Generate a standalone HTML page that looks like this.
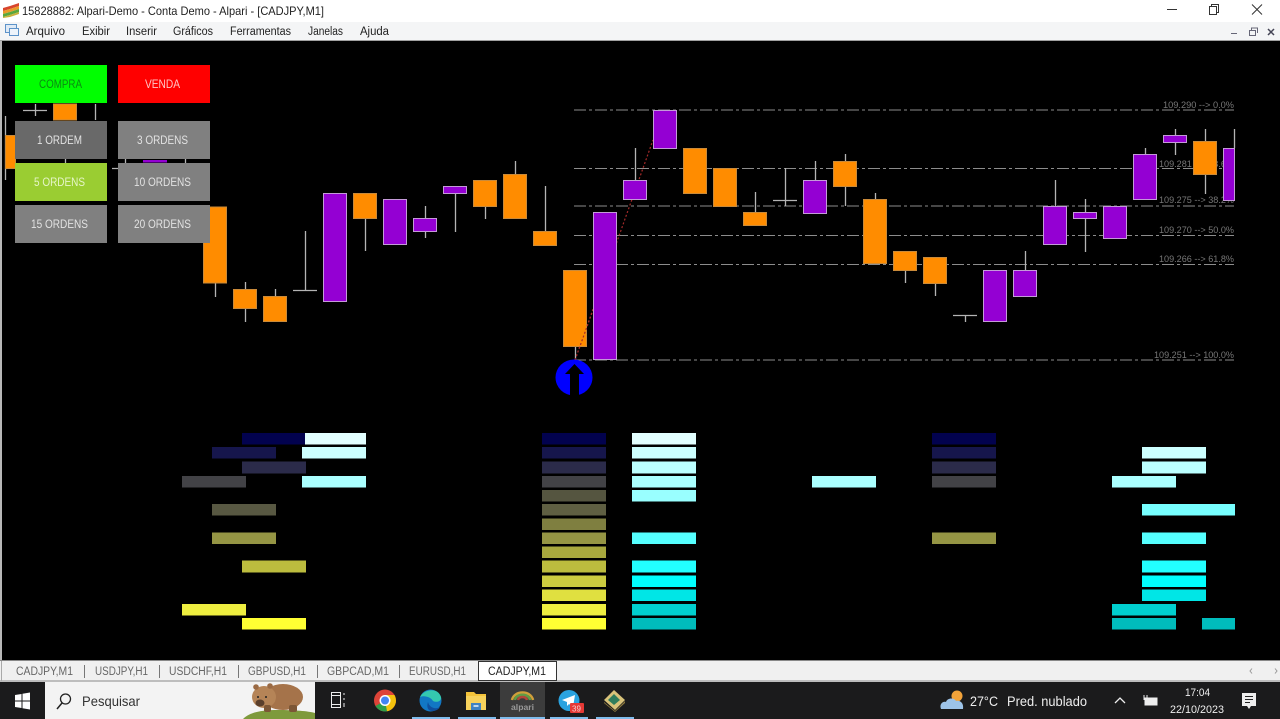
<!DOCTYPE html>
<html><head><meta charset="utf-8"><title>Alpari</title>
<style>
html,body{margin:0;padding:0;background:#000;width:1280px;height:719px;overflow:hidden}
svg{display:block;font-family:"Liberation Sans",sans-serif;filter:blur(.35px)}
.w{stroke:#b4b4b4;stroke-width:1.300;fill:none}
.o{fill:#ff8c00;stroke:#c98a3a;stroke-width:1}
.p{fill:#9400d3;stroke:#c49ad8;stroke-width:1}
.f{stroke:#8c8c8c;stroke-width:1;stroke-dasharray:12 3 3 3;fill:none}
.l{fill:#777;font-size:9.500px}
.b{font-size:12px;fill:#e2e2e2}
.m{font-size:11.500px;fill:#222}
.t{font-size:11.500px;fill:#666}
.s{stroke:#777;stroke-width:1}
</style></head><body>
<svg width="1280" height="719" viewBox="0 0 1280 719" xmlns="http://www.w3.org/2000/svg">
<rect width="1280" height="719" fill="#000"/>
<!-- title bar -->
<rect width="1280" height="22" fill="#fff"/>
<g>
<path d="M3 8 L10 6 L19 3 L19 6 L10 9 L3 11Z" fill="#d8452c"/>
<path d="M3 11 L10 9 L19 6 L19 9 L10 12 L3 14Z" fill="#ea9a2a"/>
<path d="M3 14 L10 12 L19 9 L19 12 L10 15 L3 17Z" fill="#5aa83c"/>
<path d="M3 17 L10 15 L19 12 L19 14 L10 17 L3 18Z" fill="#c9b13a"/>
</g>
<text x="22" y="15" font-size="12" fill="#222" textLength="302" lengthAdjust="spacingAndGlyphs">15828882: Alpari-Demo - Conta Demo - Alpari - [CADJPY,M1]</text>
<path d="M1167 9.500H1177" stroke="#333" fill="none"/>
<path d="M1209.500 6.500h7v8h-7z M1211.500 6.500v-2h7v8h-2" stroke="#333" fill="none"/>
<path d="M1252 4.500L1262 14.500M1262 4.500L1252 14.500" stroke="#333" fill="none"/>
<!-- menu bar -->
<rect y="22" width="1280" height="18" fill="#f4f5f6"/>
<rect y="40" width="1280" height="1" fill="#a0a0a0"/>
<rect x="5.500" y="24.500" width="11" height="8" fill="#dfeaf6" stroke="#5d93c9"/>
<rect x="9.500" y="28.500" width="9" height="7" fill="#eef4fb" stroke="#5d93c9"/>
<text class="m" x="26" y="35" textLength="39" lengthAdjust="spacingAndGlyphs">Arquivo</text>
<text class="m" x="82" y="35" textLength="28" lengthAdjust="spacingAndGlyphs">Exibir</text>
<text class="m" x="126" y="35" textLength="31" lengthAdjust="spacingAndGlyphs">Inserir</text>
<text class="m" x="173" y="35" textLength="40" lengthAdjust="spacingAndGlyphs">Gráficos</text>
<text class="m" x="230" y="35" textLength="61" lengthAdjust="spacingAndGlyphs">Ferramentas</text>
<text class="m" x="308" y="35" textLength="35" lengthAdjust="spacingAndGlyphs">Janelas</text>
<text class="m" x="360" y="35" textLength="29" lengthAdjust="spacingAndGlyphs">Ajuda</text>
<path d="M1231 33.500h6" stroke="#667" fill="none"/>
<path d="M1249.500 30.500h6v5h-6z M1251.500 30v-2h6v5" stroke="#667" fill="none"/>
<path d="M1268 29l6 6M1274 29l-6 6" stroke="#445" stroke-width="1.500" fill="none"/>
<rect x="0" y="41" width="2" height="620" fill="#b8b8b8"/>

<!-- fib lines -->
<g class="f">
<path d="M574 110H1234"/><path d="M574 168.500H1234"/><path d="M574 206H1234"/><path d="M574 235.500H1234"/><path d="M574 264.500H1234"/><path d="M574 360H1234"/>
</g>
<g class="l">
<text x="1163" y="108" textLength="71" lengthAdjust="spacingAndGlyphs">109.290 --&gt; 0.0%</text>
<text x="1159" y="167" textLength="75" lengthAdjust="spacingAndGlyphs">109.281 --&gt; 23.6%</text>
<text x="1159" y="203" textLength="75" lengthAdjust="spacingAndGlyphs">109.275 --&gt; 38.2%</text>
<text x="1159" y="233" textLength="75" lengthAdjust="spacingAndGlyphs">109.270 --&gt; 50.0%</text>
<text x="1159" y="262" textLength="75" lengthAdjust="spacingAndGlyphs">109.266 --&gt; 61.8%</text>
<text x="1154" y="358" textLength="80" lengthAdjust="spacingAndGlyphs">109.251 --&gt; 100.0%</text>
</g>

<!-- wicks -->
<path class="w" d="M5.500 116V180 M35.500 104V116 M23 110.500H47 M95.500 104V120 M65.500 159V163 M125.500 159V163 M185.500 159V163 M112 168.500H119
M215.500 283V297 M245.500 282V322 M275.500 289V296 M305.500 231V290 M293 290.500H317 M365.500 219V251 M425.500 206V238 M455.500 193V232 M485.500 207V219 M515.500 161V174 M545.500 186V231 M575.500 347V360
M635.500 148V180 M755.500 192V213 M785.500 168V206 M773 200.500H797 M815.500 161V180 M845.500 154V206 M875.500 193V200 M905.500 270V283 M935.500 283V296 M953 315.500H977 M965.500 315V322 M1025.500 251V270 M1055.500 180V206 M1085.500 199V252 M1145.500 148V155 M1175.500 129V155 M1205.500 129V194 M1234.500 129V148"/>

<!-- red dotted trend -->
<path d="M575 360L653 140" stroke="#a52a2a" stroke-width="1.200" stroke-dasharray="2 2" fill="none"/>

<!-- candles -->
<rect class="o" x="5.500" y="135.500" width="10" height="33"/>
<rect class="o" x="53.500" y="104" width="23" height="16"/>
<rect x="143" y="160" width="24" height="2.500" fill="#9400d3"/>
<rect class="o" x="203.500" y="207" width="23" height="76"/>
<rect class="o" x="233.500" y="289.500" width="23" height="19"/>
<rect class="o" x="263.500" y="296.500" width="23" height="25"/>
<rect class="p" x="323.500" y="193.500" width="23" height="108"/>
<rect class="o" x="353.500" y="193.500" width="23" height="25"/>
<rect class="p" x="383.500" y="199.500" width="23" height="45"/>
<rect class="p" x="413.500" y="218.500" width="23" height="13"/>
<rect class="p" x="443.500" y="186.500" width="23" height="7"/>
<rect class="o" x="473.500" y="180.500" width="23" height="26"/>
<rect class="o" x="503.500" y="174.500" width="23" height="44"/>
<rect class="o" x="533.500" y="231.500" width="23" height="14"/>
<rect class="o" x="563.500" y="270.500" width="23" height="76"/>
<path d="M575 360L593 310" stroke="#a52a2a" stroke-width="1.200" stroke-dasharray="2 2" fill="none"/>
<rect class="p" x="593.500" y="212.500" width="23" height="147"/>
<rect class="p" x="623.500" y="180.500" width="23" height="19"/>
<rect class="p" x="653.500" y="110.500" width="23" height="38"/>
<rect class="o" x="683.500" y="148.500" width="23" height="45"/>
<rect class="o" x="713.500" y="168.500" width="23" height="38"/>
<rect class="o" x="743.500" y="212.500" width="23" height="13"/>
<rect class="p" x="803.500" y="180.500" width="23" height="33"/>
<rect class="o" x="833.500" y="161.500" width="23" height="25"/>
<rect class="o" x="863.500" y="199.500" width="23" height="64"/>
<rect class="o" x="893.500" y="251.500" width="23" height="19"/>
<rect class="o" x="923.500" y="257.500" width="23" height="26"/>
<rect class="p" x="983.500" y="270.500" width="23" height="51"/>
<rect class="p" x="1013.500" y="270.500" width="23" height="26"/>
<rect class="p" x="1043.500" y="206.500" width="23" height="38"/>
<rect class="p" x="1073.500" y="212.500" width="23" height="6"/>
<rect class="p" x="1103.500" y="206.500" width="23" height="32"/>
<rect class="p" x="1133.500" y="154.500" width="23" height="45"/>
<rect class="p" x="1163.500" y="135.500" width="23" height="7"/>
<rect class="o" x="1193.500" y="141.500" width="23" height="33"/>
<rect class="p" x="1223.500" y="148.500" width="11" height="52"/>

<!-- buy arrow -->
<ellipse cx="574" cy="377.500" rx="18.500" ry="18" fill="#0000ff"/>
<path d="M574.500 364L584 374H579V396H570V374H565Z" fill="#000"/>

<!-- panel buttons -->
<rect x="15" y="65" width="92" height="38" fill="#00ff00"/>
<text x="39" y="88" font-size="12" fill="#0b8a12" textLength="43" lengthAdjust="spacingAndGlyphs">COMPRA</text>
<rect x="118" y="65" width="92" height="38" fill="#ff0000"/>
<text x="145" y="88" font-size="12" fill="#ffc4c4" textLength="35" lengthAdjust="spacingAndGlyphs">VENDA</text>
<rect x="15" y="121" width="92" height="38" fill="#696969"/>
<text class="b" x="37" y="144" textLength="45" lengthAdjust="spacingAndGlyphs">1 ORDEM</text>
<rect x="118" y="121" width="92" height="38" fill="#808080"/>
<text class="b" x="137" y="144" textLength="51" lengthAdjust="spacingAndGlyphs">3 ORDENS</text>
<rect x="15" y="163" width="92" height="38" fill="#9acd32"/>
<text class="b" x="34" y="186" style="fill:#e6f5c8" textLength="51" lengthAdjust="spacingAndGlyphs">5 ORDENS</text>
<rect x="118" y="163" width="92" height="38" fill="#808080"/>
<text class="b" x="134" y="186" textLength="57" lengthAdjust="spacingAndGlyphs">10 ORDENS</text>
<rect x="15" y="205" width="92" height="38" fill="#808080"/>
<text class="b" x="31" y="228" textLength="57" lengthAdjust="spacingAndGlyphs">15 ORDENS</text>
<rect x="118" y="205" width="92" height="38" fill="#808080"/>
<text class="b" x="134" y="228" textLength="57" lengthAdjust="spacingAndGlyphs">20 ORDENS</text>

<!-- yellow series bars -->
<g>
<rect x="242" y="433" width="64" height="11.500" fill="#02024e"/>
<rect x="212" y="447" width="64" height="11.500" fill="#16164c"/>
<rect x="242" y="461.500" width="64" height="12" fill="#2b2b4a"/>
<rect x="182" y="476" width="64" height="11.500" fill="#424246"/>
<rect x="212" y="504" width="64" height="11.500" fill="#585842"/>
<rect x="212" y="532.500" width="64" height="11.500" fill="#959544"/>
<rect x="242" y="560.500" width="64" height="12" fill="#bcbc3e"/>
<rect x="182" y="604" width="64" height="11.500" fill="#eeee40"/>
<rect x="242" y="618" width="64" height="11.500" fill="#ffff33"/>

<rect x="542" y="433" width="64" height="11.500" fill="#02024e"/>
<rect x="542" y="447" width="64" height="11.500" fill="#16164c"/>
<rect x="542" y="461.500" width="64" height="12" fill="#2b2b4a"/>
<rect x="542" y="476" width="64" height="11.500" fill="#424246"/>
<rect x="542" y="490" width="64" height="11.500" fill="#555540"/>
<rect x="542" y="504" width="64" height="11.500" fill="#5f5f42"/>
<rect x="542" y="518.500" width="64" height="11.500" fill="#7f7f40"/>
<rect x="542" y="532.500" width="64" height="11.500" fill="#959544"/>
<rect x="542" y="546.500" width="64" height="11.500" fill="#a8a83e"/>
<rect x="542" y="560.500" width="64" height="12" fill="#bcbc3e"/>
<rect x="542" y="575.500" width="64" height="11.500" fill="#cccc40"/>
<rect x="542" y="589.500" width="64" height="11.500" fill="#e0e040"/>
<rect x="542" y="604" width="64" height="11.500" fill="#eeee40"/>
<rect x="542" y="618" width="64" height="11.500" fill="#ffff33"/>

<rect x="932" y="433" width="64" height="11.500" fill="#02024e"/>
<rect x="932" y="447" width="64" height="11.500" fill="#16164c"/>
<rect x="932" y="461.500" width="64" height="12" fill="#2b2b4a"/>
<rect x="932" y="476" width="64" height="11.500" fill="#424246"/>
<rect x="932" y="532.500" width="64" height="11.500" fill="#959544"/>
</g>
<!-- cyan series bars -->
<g>
<rect x="305" y="433" width="61" height="11.500" fill="#e2ffff"/>
<rect x="302" y="447" width="64" height="11.500" fill="#ccffff"/>
<rect x="302" y="476" width="64" height="11.500" fill="#aaffff"/>

<rect x="632" y="433" width="64" height="11.500" fill="#e2ffff"/>
<rect x="632" y="447" width="64" height="11.500" fill="#ccffff"/>
<rect x="632" y="461.500" width="64" height="12" fill="#bbffff"/>
<rect x="632" y="476" width="64" height="11.500" fill="#aaffff"/>
<rect x="632" y="490" width="64" height="11.500" fill="#99ffff"/>
<rect x="632" y="532.500" width="64" height="11.500" fill="#55ffff"/>
<rect x="632" y="560.500" width="64" height="12" fill="#22ffff"/>
<rect x="632" y="575.500" width="64" height="11.500" fill="#00ffff"/>
<rect x="632" y="589.500" width="64" height="11.500" fill="#00e6e6"/>
<rect x="632" y="604" width="64" height="11.500" fill="#00cfcf"/>
<rect x="632" y="618" width="64" height="11.500" fill="#00bcbc"/>

<rect x="812" y="476" width="64" height="11.500" fill="#aaffff"/>

<rect x="1142" y="447" width="64" height="11.500" fill="#ccffff"/>
<rect x="1142" y="461.500" width="64" height="12" fill="#bbffff"/>
<rect x="1112" y="476" width="64" height="11.500" fill="#aaffff"/>
<rect x="1142" y="504" width="93" height="11.500" fill="#77ffff"/>
<rect x="1142" y="532.500" width="64" height="11.500" fill="#55ffff"/>
<rect x="1142" y="560.500" width="64" height="12" fill="#22ffff"/>
<rect x="1142" y="575.500" width="64" height="11.500" fill="#00ffff"/>
<rect x="1142" y="589.500" width="64" height="11.500" fill="#00e6e6"/>
<rect x="1112" y="604" width="64" height="11.500" fill="#00cfcf"/>
<rect x="1112" y="618" width="64" height="11.500" fill="#00bcbc"/>
<rect x="1202" y="618" width="33" height="11.500" fill="#00bcbc"/>
</g>

<!-- tab bar -->
<rect y="660" width="1280" height="1" fill="#888"/>
<rect y="661" width="1280" height="21" fill="#f0f0f0"/>
<rect y="680.500" width="1280" height="1" fill="#8a8a8a"/>
<rect x="1" y="661" width="1" height="20" fill="#aaa"/>
<text class="t" x="16" y="675" textLength="57" lengthAdjust="spacingAndGlyphs">CADJPY,M1</text>
<path class="s" d="M84.500 665V678M159.500 665V678M238.500 665V678M317.500 665V678M399.500 665V678"/>
<text class="t" x="95" y="675" textLength="53" lengthAdjust="spacingAndGlyphs">USDJPY,H1</text>
<text class="t" x="169" y="675" textLength="58" lengthAdjust="spacingAndGlyphs">USDCHF,H1</text>
<text class="t" x="248" y="675" textLength="58" lengthAdjust="spacingAndGlyphs">GBPUSD,H1</text>
<text class="t" x="327" y="675" textLength="62" lengthAdjust="spacingAndGlyphs">GBPCAD,M1</text>
<text class="t" x="409" y="675" textLength="57" lengthAdjust="spacingAndGlyphs">EURUSD,H1</text>
<rect x="478.500" y="661.500" width="78" height="19" fill="#fff" stroke="#333"/>
<text x="488" y="675" font-size="11.500" fill="#222" textLength="58" lengthAdjust="spacingAndGlyphs">CADJPY,M1</text>
<path d="M1252 668.500l-2 2.500 2 2.500M1275 668.500l2 2.500-2 2.500" stroke="#999" fill="none"/>

<!-- taskbar -->
<rect y="682" width="1280" height="37" fill="#1b1b1c"/>
<g fill="#fff">
<path d="M15 695l6.500-1v6.500H15z M22.500 693.800l7.500-1.300v8H22.500z M15 701.500h6.500v6.500L15 707z M22.500 701.500H30v8l-7.500-1.200z"/>
</g>
<rect x="45" y="682" width="270" height="37" fill="#f3f3f3"/>
<circle cx="65.500" cy="699" r="5" fill="none" stroke="#222" stroke-width="1.300"/>
<path d="M62 703l-5 6" stroke="#222" stroke-width="1.500" fill="none"/>
<text x="82" y="706" font-size="14" fill="#333" textLength="58" lengthAdjust="spacingAndGlyphs">Pesquisar</text>
<!-- wombat -->
<path d="M243 719C250 712 262 710 278 710 C294 710 308 711 315 713V719Z" fill="#7e9a3c"/>
<ellipse cx="283" cy="697" rx="20" ry="13" fill="#a5734a"/>
<ellipse cx="264" cy="697" rx="12" ry="11" fill="#b58457"/>
<circle cx="256" cy="687" r="2.800" fill="#9a6a44"/><circle cx="270" cy="686" r="2.800" fill="#9a6a44"/>
<ellipse cx="260" cy="703" rx="4.500" ry="3.500" fill="#5a3f2c"/>
<circle cx="258" cy="697" r="1" fill="#222"/><circle cx="266" cy="697" r="1" fill="#222"/>
<rect x="264" y="705" width="7" height="7" rx="2" fill="#7c5636"/><rect x="289" y="705" width="8" height="7" rx="2" fill="#7c5636"/>
<!-- task view -->
<path d="M331.500 692.500h9v3h-9z M331.500 704.500h9v3h-9z M331.500 696v8M340.500 696v8" stroke="#eee" fill="none"/>
<path d="M344 693v2M344 698v2M344 703v4" stroke="#eee" fill="none"/>
<!-- chrome -->
<circle cx="385" cy="700.500" r="11" fill="#dd4438"/>
<path d="M385 700.500L375.500 706A11 11 0 0 0 390 710.300Z" fill="#2f9e4a"/>
<path d="M385 700.500L396 700.500A11 11 0 0 0 394.500 695L385 695Z" fill="#f4c20d"/>
<path d="M385 700.500L396 700.500A11 11 0 0 1 387 711.300Z" fill="#f4c20d"/>
<circle cx="385" cy="700.500" r="5.500" fill="#fff"/><circle cx="385" cy="700.500" r="4" fill="#4285f4"/>
<!-- edge -->
<circle cx="430.500" cy="700.500" r="11" fill="#1277c4"/>
<path d="M420 697C424 689 438 687 441 697C442 701 437 703 433 701C431 697 424 695 420 697Z" fill="#34c8b0"/>
<path d="M428 702c1 5 7 8 12 5c-2 4-8 5-11 3c-2-2-2-5-1-8z" fill="#0f4f9e"/>
<!-- explorer -->
<path d="M466 692h8l2 2h10v16h-20z" fill="#f4c33a"/>
<rect x="466" y="696" width="20" height="14" fill="#f7d25c"/>
<rect x="471" y="703" width="10" height="7" fill="#3f83c4"/>
<rect x="473.500" y="705" width="5" height="2" fill="#bfd8ee"/>
<!-- alpari -->
<rect x="500" y="682" width="45" height="37" fill="#3c3c3c"/>
<path d="M512 700C514 690 531 690 533 700" stroke="#d0a03a" stroke-width="2.500" fill="none"/>
<path d="M515 700C516 693 529 693 530 700" stroke="#5f9c46" stroke-width="2.500" fill="none"/>
<path d="M518 700C519 696 526 696 527 700" stroke="#b2473a" stroke-width="2.500" fill="none"/>
<text x="511" y="710" font-size="8" font-weight="bold" fill="#9a9a9a" textLength="23" lengthAdjust="spacingAndGlyphs">alpari</text>
<!-- telegram -->
<circle cx="569" cy="700.500" r="10.500" fill="#2aa3e0"/>
<path d="M562 700l13-5-2 12-4-3-2 2v-4z" fill="#fff"/>
<rect x="570" y="703" width="14" height="10" rx="1" fill="#e53935"/>
<text x="572" y="711.500" font-size="8" fill="#f6d0d0">39</text>
<!-- last app -->
<path d="M614 690l11 10-10 10-11-10z" fill="#d9c37a"/>
<path d="M614 694l6 6-6 5-6-5z" fill="#2f7d5c"/>
<path d="M604 702l11 9 10-10v2l-10 9-11-9z" fill="#8e7a3e"/>
<!-- running indicators -->
<g fill="#7fbcec">
<rect x="412" y="717" width="38" height="2"/><rect x="458" y="717" width="38" height="2"/>
<rect x="500" y="717" width="45" height="2"/><rect x="550" y="717" width="38" height="2"/><rect x="596" y="717" width="38" height="2"/>
</g>
<!-- tray -->
<circle cx="957" cy="696" r="5.500" fill="#f2a33a"/>
<path d="M941 709c-2-5 2-8 5-7c1-4 8-5 10-1c4-1 8 2 7 8z" fill="#9dc3e8"/>
<text x="970" y="706" font-size="13.500" fill="#eee" textLength="28" lengthAdjust="spacingAndGlyphs">27°C</text>
<text x="1007" y="706" font-size="13.500" fill="#eee" textLength="80" lengthAdjust="spacingAndGlyphs">Pred. nublado</text>
<path d="M1115 703l5-5 5 5" stroke="#eee" stroke-width="1.300" fill="none"/>
<rect x="1145" y="698" width="12" height="7" fill="#eee" stroke="#eee"/>
<path d="M1144 695v5M1147 695v3" stroke="#eee" fill="none"/>
<text x="1185" y="696" font-size="11" fill="#eee" textLength="25" lengthAdjust="spacingAndGlyphs">17:04</text>
<text x="1170" y="713" font-size="11" fill="#eee" textLength="54" lengthAdjust="spacingAndGlyphs">22/10/2023</text>
<path d="M1242 693h14v13h-5l-2 3-2-3h-5z" fill="#eee"/>
<path d="M1245 696.500h8M1245 699.500h8M1245 702.500h5" stroke="#222" fill="none"/>
</svg>
</body></html>
